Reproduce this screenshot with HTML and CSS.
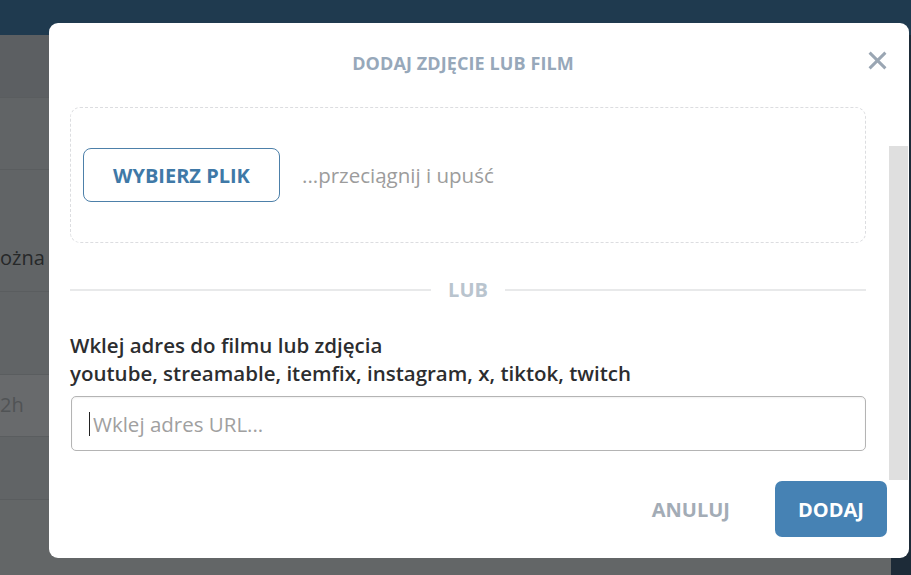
FILE: index.html
```html
<!DOCTYPE html>
<html lang="pl">
<head>
<meta charset="utf-8">
<title>Dodaj zdjęcie lub film</title>
<link rel="stylesheet" href="styles.css">
</head>
<body>
<div class="page">
  <header class="topbar"></header>
  <div class="page-main">
    <div class="feed">
      <div class="row row-top"></div>
      <div class="row row-a"></div>
      <div class="row row-b"><span class="row-text">ożna d</span></div>
      <div class="row row-c"></div>
      <div class="row row-d"><span class="row-time">2h</span></div>
      <div class="row row-e"></div>
      <div class="row row-f">
        <div class="slider"><span class="slider-dot"></span><span class="slider-bar"></span></div>
      </div>
    </div>
    <aside class="side"></aside>
  </div>
</div>

<div class="modal" role="dialog" aria-labelledby="modal-title">
  <div class="modal-header">
    <h2 id="modal-title" class="modal-title">DODAJ ZDJĘCIE LUB FILM</h2>
  </div>
  <button class="modal-close" aria-label="Zamknij">
    <svg viewBox="0 0 18 18" width="18" height="18"><path d="M1.5 1.5 L16.5 16.5 M16.5 1.5 L1.5 16.5" stroke="currentColor" stroke-width="2.8" stroke-linecap="butt" fill="none"/></svg>
  </button>
  <div class="modal-body">
    <div class="dropzone">
      <button class="btn-file">WYBIERZ PLIK</button>
      <span class="drop-hint">...przeciągnij i upuść</span>
    </div>
    <div class="separator"><span class="sep-line"></span><span class="sep-text">LUB</span><span class="sep-line"></span></div>
    <p class="url-label">Wklej adres do filmu lub zdjęcia<br>youtube, streamable, itemfix, instagram, x, tiktok, twitch</p>
    <div class="url-field">
      <input class="url-input" type="text" placeholder="Wklej adres URL...">
      <span class="caret"></span>
    </div>
  </div>
  <div class="modal-footer">
    <button class="btn-cancel">ANULUJ</button>
    <button class="btn-add">DODAJ</button>
  </div>
  <div class="scroll-track"></div>
</div>
</body>
</html>
```
FILE: styles.css
```css
* { box-sizing: border-box; }
html, body { margin: 0; padding: 0; }
body {
  width: 911px;
  height: 575px;
  overflow: hidden;
  font-family: "Open Sans", "Noto Sans", sans-serif;
  background: #606366;
  position: relative;
}

/* underlying page (dimmed) */
.page { display: flex; flex-direction: column; height: 575px; }
.topbar { height: 35px; background: #1f3a4f; flex: none; }
.page-main { flex: 1; display: flex; }
.feed { flex: 1; display: flex; flex-direction: column; background: #616466; }
.side { width: 20px; background: #1d2b38; }
.row { border-bottom: 1px solid #5a5d5f; position: relative; }
.row-top { height: 63px; background: #5c5f62; }
.row-a { height: 72px; }
.row-b { height: 122px; }
.row-c { height: 83px; }
.row-d { height: 62px; background: #686a6c; }
.row-e { height: 63px; }
.row-f { flex: 1; border-bottom: 0; background: #636667; }
.row-text {
  position: absolute; left: 0; top: 74px;
  font-size: 20px; color: #262829; white-space: nowrap;
}
.row-time {
  position: absolute; left: 0; top: 16px;
  font-size: 20px; color: #505355;
}
.slider { position: absolute; left: 474px; top: 10px; width: 54px; height: 20px; }
.slider-dot { position: absolute; left: 0; top: 8px; width: 14px; height: 12px; border-radius: 50%; background: #4a5258; }
.slider-bar { position: absolute; left: 10px; top: 4px; width: 44px; height: 5px; border-radius: 3px; background: #1e2f3d; }

/* modal */
.modal {
  position: absolute;
  left: 49px; top: 23px;
  width: 860px; height: 535px;
  background: #fff;
  border-radius: 9px;
  display: flex;
  flex-direction: column;
}
.modal-header { padding: 28px 43px 32px 21px; }
.modal-title {
  margin: 0;
  text-align: center;
  padding-right: 10px;
  font-size: 18px;
  line-height: 24px;
  font-weight: 700;
  color: #97a8ba;
  letter-spacing: 0.1px;
}
.modal-close {
  position: absolute;
  right: 22px; top: 28px;
  width: 19px; height: 19px;
  padding: 0; border: 0; background: none;
  color: #9aa6b3;
  display: flex;
}
.modal-close svg { width: 19px; height: 19px; }
.modal-body { padding: 0 43px 0 21px; }
.dropzone {
  height: 136px;
  border: 1px dashed #dcdde0;
  border-radius: 10px;
  display: flex;
  align-items: center;
  padding-left: 12px;
  gap: 22px;
}
.btn-file {
  width: 197px; height: 54px;
  border: 1px solid #4d80a9;
  border-radius: 8px;
  background: #fff;
  font-family: inherit;
  font-size: 20px;
  font-weight: 700;
  color: #3f79a7;
}
.drop-hint { font-size: 20.5px; color: #9c9c9c; }
.separator {
  margin-top: 35px;
  height: 24px;
  display: flex;
  align-items: center;
  gap: 17px;
}
.sep-line { flex: 1; height: 2px; background: #e8e9ea; }
.sep-text { font-size: 20px; font-weight: 700; color: #b9c4ce; line-height: 24px; }
.url-label {
  margin: 29px 0 9px;
  font-size: 20.5px;
  line-height: 28px;
  font-weight: 600;
  color: #2c2d2f;
}
.url-field { position: relative; margin-left: 1px; }
.url-input {
  display: block;
  width: 100%;
  height: 55px;
  border: 1px solid #b4b4b4;
  border-radius: 5px;
  box-shadow: inset 0 1px 2px rgba(0,0,0,0.06);
  padding: 0 0 0 21px;
  font-family: inherit;
  font-size: 20.5px;
  color: #333;
  outline: none;
}
.url-input::placeholder { color: #a0a0a0; }
.caret {
  position: absolute;
  left: 18px; top: 16px;
  width: 1px; height: 24px;
  background: #222;
}
.modal-footer {
  margin-top: auto;
  padding: 0 22px 21px 0;
  display: flex;
  justify-content: flex-end;
  gap: 23px;
}
.btn-cancel, .btn-add {
  height: 56px;
  padding: 0 22px;
  border: 0;
  border-radius: 7px;
  font-family: inherit;
  font-size: 20px;
  font-weight: 700;
}
.btn-cancel { background: #fff; color: #a3acb6; }
.btn-add { background: #4682b4; color: #fff; width: 112px; }
.scroll-track {
  position: absolute;
  left: 840px; top: 123px;
  width: 19px; height: 334px;
  background: #dfdfdf;
}
```
